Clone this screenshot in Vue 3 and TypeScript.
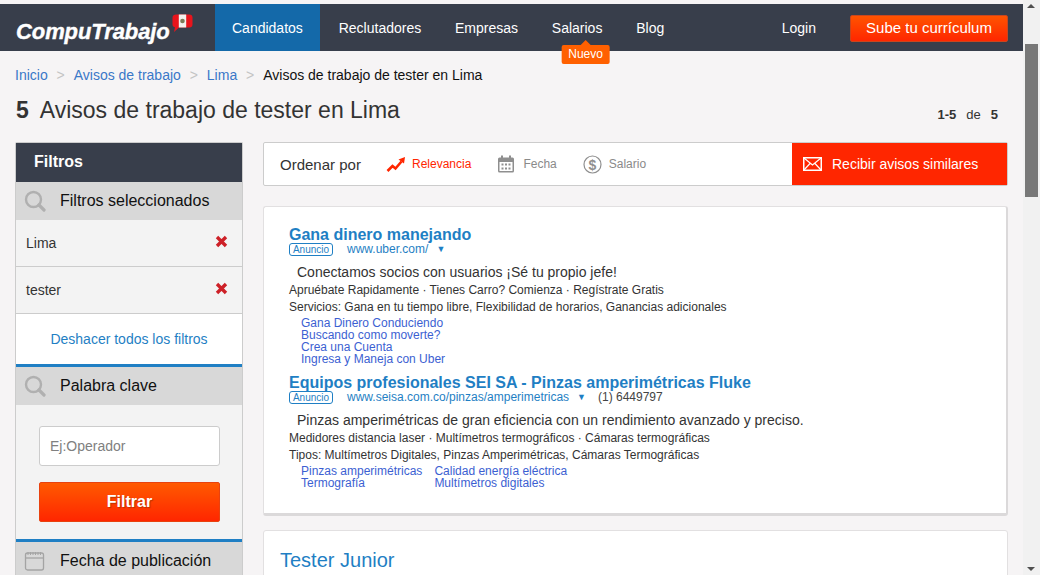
<script setup lang="ts">
import { ref } from 'vue'

interface Ad {
  title: string
  url: string
  phone?: string
  desc: string
  lines: string[]
  links: string[]
  cols: number
}

const navItems = ['Candidatos', 'Reclutadores', 'Empresas', 'Salarios', 'Blog']
const crumbs = ['Avisos de trabajo', 'Lima']
const filters = ['Lima', 'tester']
const keyword = ref('')

const ads: Ad[] = [
  {
    title: 'Gana dinero manejando',
    url: 'www.uber.com/',
    desc: 'Conectamos socios con usuarios ¡Sé tu propio jefe!',
    lines: [
      'Apruébate Rapidamente · Tienes Carro? Comienza · Regístrate Gratis',
      'Servicios: Gana en tu tiempo libre, Flexibilidad de horarios, Ganancias adicionales'
    ],
    links: ['Gana Dinero Conduciendo', 'Buscando como moverte?', 'Crea una Cuenta', 'Ingresa y Maneja con Uber'],
    cols: 1
  },
  {
    title: 'Equipos profesionales SEI SA - Pinzas amperimétricas Fluke',
    url: 'www.seisa.com.co/pinzas/amperimetricas',
    phone: '(1) 6449797',
    desc: 'Pinzas amperimétricas de gran eficiencia con un rendimiento avanzado y preciso.',
    lines: [
      'Medidores distancia laser · Multímetros termográficos · Cámaras termográficas',
      'Tipos: Multímetros Digitales, Pinzas Amperimétricas, Cámaras Termográficas'
    ],
    links: ['Pinzas amperimétricas', 'Calidad energía eléctrica', 'Termografía', 'Multímetros digitales'],
    cols: 2
  }
]
</script>

<template>
  <div class="window">
    <div class="page">
      <header class="topbar">
        <a class="logo">
          <span class="logo-text">CompuTrabajo</span>
          <svg class="flag" width="21" height="19" viewBox="0 0 21 19">
            <path d="M4 .5h13.500c1.800 0 3 1.200 3 3v7c0 1.800-1.200 3-3 3H7l-5 4.500 1-4.700c-1.600-.3-2.500-1.300-2.500-2.800v-7C.5 1.700 2.200.5 4 .5z" fill="#e8141c" />
            <rect x="6.800" y=".5" width="7.400" height="13" fill="#f4f1ee" />
            <circle cx="10.500" cy="7" r="2.300" fill="#7c7a58" />
          </svg>
        </a>
        <nav class="nav">
          <a
            v-for="(item, i) in navItems"
            :key="item"
            class="nav-item"
            :class="{ active: i === 0 }"
          >
            {{ item }}
            <span v-if="item === 'Salarios'" class="nuevo">Nuevo</span>
          </a>
        </nav>
        <a class="login">Login</a>
        <a class="upload">Sube tu currículum</a>
      </header>

      <div class="crumbs">
        <a>Inicio</a>
        <template v-for="c in crumbs" :key="c">
          <span class="sep">&gt;</span>
          <a>{{ c }}</a>
        </template>
        <span class="sep">&gt;</span>
        <span class="here">Avisos de trabajo de tester en Lima</span>
      </div>

      <div class="heading">
        <h1><b>5</b>Avisos de trabajo de tester en Lima</h1>
        <div class="count"><b>1-5</b><span>de</span><b>5</b></div>
      </div>

      <div class="columns">
        <aside class="filters">
          <div class="filters-title">Filtros</div>

          <div class="group-title">
            <svg class="g-icon" width="22" height="22" viewBox="0 0 22 22" fill="none" stroke="#b0b0b0">
              <circle cx="9.500" cy="9.500" r="7.500" stroke-width="2.400" />
              <path d="M15 15l5 5" stroke-width="3.200" stroke-linecap="round" />
            </svg>
            Filtros seleccionados
          </div>
          <div v-for="f in filters" :key="f" class="chosen">
            <span>{{ f }}</span>
            <svg width="13" height="13" viewBox="0 0 13 13">
              <path d="M2 2l9 9M11 2l-9 9" stroke="#cd2027" stroke-width="3.400" />
            </svg>
          </div>
          <a class="undo">Deshacer todos los filtros</a>

          <div class="group-title ruled">
            <svg class="g-icon" width="22" height="22" viewBox="0 0 22 22" fill="none" stroke="#b0b0b0">
              <circle cx="9.500" cy="9.500" r="7.500" stroke-width="2.400" />
              <path d="M15 15l5 5" stroke-width="3.200" stroke-linecap="round" />
            </svg>
            Palabra clave
          </div>
          <div class="keyword">
            <input v-model="keyword" type="text" placeholder="Ej:Operador">
            <button type="button">Filtrar</button>
          </div>

          <div class="group-title ruled">
            <svg class="g-icon" width="22" height="22" viewBox="0 0 22 22" fill="none" stroke="#a4a4a4">
              <rect x="1.500" y="3" width="18" height="17" rx="2" stroke-width="1.300" />
              <path d="M1.500 8h18" stroke-width="1.300" />
              <path d="M4 2v3M6.500 2v3M9 2v3M11.500 2v3M14 2v3M16.500 2v3" stroke-width="1" />
            </svg>
            Fecha de publicación
          </div>
        </aside>

        <section class="results">
          <div class="sortbar">
            <span class="sort-label">Ordenar por</span>
            <a class="sort on">
              <svg width="19" height="17" viewBox="0 0 19 17" fill="none">
                <path d="M1.500 15l5-5 3 2.500 6-7" stroke="#ff2600" stroke-width="2.600" />
                <path d="M12.500 3.500L19 1l-1 6.500z" fill="#ff2600" />
              </svg>
              Relevancia
            </a>
            <a class="sort">
              <svg width="19" height="18" viewBox="0 0 19 18">
                <rect x="1" y="2.500" width="16" height="15" rx="1.500" fill="#8f8f8f" />
                <rect x="2.500" y="7" width="13" height="9" fill="#fff" />
                <path d="M4 .5h2v3H4zM12 .5h2v3h-2z" fill="#8f8f8f" />
                <path d="M4.500 8.500h2v2h-2zM8 8.500h2v2H8zM11.500 8.500h2v2h-2zM4.500 12.500h2v2h-2zM8 12.500h2v2H8zM11.500 12.500h2v2h-2z" fill="#8f8f8f" />
              </svg>
              Fecha
            </a>
            <a class="sort">
              <svg width="19" height="19" viewBox="0 0 19 19">
                <circle cx="9.500" cy="9.500" r="8.500" fill="none" stroke="#8f8f8f" stroke-width="1.200" />
                <text x="9.500" y="14.500" text-anchor="middle" class="dollar">$</text>
              </svg>
              Salario
            </a>
            <a class="alerts">
              <svg width="19" height="14" viewBox="0 0 19 14" fill="none" stroke="#fff">
                <rect x=".75" y=".75" width="17.500" height="12.500" stroke-width="1.500" />
                <path d="M1 1l8.500 7L18 1M1 13l6-6.500M18 13l-6-6.500" stroke-width="1.200" />
              </svg>
              Recibir avisos similares
            </a>
          </div>

          <div class="card ads">
            <div v-for="ad in ads" :key="ad.title" class="ad">
              <a class="ad-title">{{ ad.title }}</a>
              <div class="ad-meta">
                <span class="badge">Anuncio</span>
                <a class="ad-url">{{ ad.url }}</a>
                <span class="caret">▼</span>
                <span v-if="ad.phone" class="phone">{{ ad.phone }}</span>
              </div>
              <p class="ad-desc">{{ ad.desc }}</p>
              <p v-for="l in ad.lines" :key="l" class="ad-line">{{ l }}</p>
              <div class="ad-links" :class="{ two: ad.cols === 2 }">
                <a v-for="s in ad.links" :key="s">{{ s }}</a>
              </div>
            </div>
          </div>

          <div class="card job">
            <a class="job-title">Tester Junior</a>
          </div>
        </section>
      </div>
    </div>

    <div class="scrollbar">
      <span class="arrow up"></span>
      <span class="thumb"></span>
      <span class="arrow down"></span>
    </div>
  </div>
</template>

<style>
html,
body {
  margin: 0;
  height: 100%;
  overflow: hidden;
}
</style>

<style scoped>
.window {
  display: flex;
  height: 575px;
  overflow: hidden;
  background: #f6f4f5;
  font-family: "Liberation Sans", Arial, sans-serif;
  color: #333;
}

.page {
  flex: 1;
  min-width: 0;
  padding-top: 4px;
  overflow: hidden;
}

a {
  cursor: pointer;
}

.topbar {
  display: flex;
  align-items: center;
  height: 47px;
  background: #383e4b;
  color: #fff;
}

.logo {
  display: flex;
  align-items: flex-start;
  width: 215px;
  height: 47px;
  box-sizing: border-box;
  padding-left: 16px;
}

.logo-text {
  margin-top: 15px;
  font-size: 22px;
  line-height: 26px;
  font-weight: bold;
  font-style: italic;
  letter-spacing: -0.1px;
  -webkit-text-stroke: 0.4px #fff;
}

.flag {
  margin: 10px 0 0 2px;
}

.nav {
  display: flex;
  height: 47px;
}

.nav-item {
  position: relative;
  padding: 0 16.9px;
  font-size: 14px;
  line-height: 49px;
}

.nav-item.active {
  margin-right: 1.5px;
  padding: 0 17.5px 0 17px;
  background: #1469a9;
}

.nuevo {
  position: absolute;
  left: calc(50% + 8.5px);
  top: 41px;
  transform: translateX(-50%);
  padding: 0 7px;
  height: 19px;
  border-radius: 2px;
  background: #ff6000;
  font-size: 12px;
  line-height: 18px;
}

.nuevo::before {
  content: '';
  position: absolute;
  left: 50%;
  top: -5px;
  margin-left: -5px;
  border: 5px solid transparent;
  border-top: 0;
  border-bottom-color: #ff6000;
}

.login {
  margin-left: auto;
  font-size: 14px;
}

.upload {
  width: 158px;
  height: 27px;
  box-sizing: border-box;
  margin: 1px 15px 0 34px;
  border: 1px solid #c9461f;
  border-radius: 2px;
  background: linear-gradient(#ff5400, #ff2600);
  font-size: 15px;
  line-height: 24px;
  text-align: center;
}

.crumbs {
  display: flex;
  margin: 15px 0 0 15px;
  font-size: 14px;
  line-height: 18px;
  color: #3a78c8;
}

.sep {
  width: 26px;
  text-align: center;
  color: #c4c4c4;
}

.here {
  color: #111;
}

.heading {
  display: flex;
  align-items: center;
  justify-content: space-between;
  height: 32px;
  margin: 10px 25px 0 16px;
}

h1 {
  margin: 0;
  font-size: 23px;
  font-weight: normal;
}

h1 b {
  margin-right: 11px;
}

.count {
  display: flex;
  gap: 10px;
  margin-top: 8px;
  font-size: 13px;
}

.columns {
  display: flex;
  gap: 20px;
  margin: 16px 15px 0;
  align-items: flex-start;
}

.filters {
  width: 226px;
  flex: none;
  border: 1px solid #ccc;
  border-bottom: 0;
  border-radius: 2px 2px 0 0;
  background: #fff;
}

.filters-title {
  height: 39px;
  padding-left: 18px;
  background: #383e4b;
  color: #fff;
  font-size: 16px;
  font-weight: bold;
  line-height: 38px;
}

.group-title {
  position: relative;
  height: 38px;
  padding-left: 44px;
  background: #d8d8d8;
  color: #111;
  font-size: 16px;
  line-height: 37px;
}

.group-title.ruled {
  border-top: 3px solid #1f7fc4;
}

.g-icon {
  position: absolute;
  left: 8px;
  top: 8px;
}

.chosen {
  display: flex;
  align-items: center;
  justify-content: space-between;
  height: 46px;
  padding: 0 14px 0 10px;
  border-bottom: 1px solid #ccc;
  background: #f3f3f3;
  font-size: 14px;
}

.chosen svg {
  margin-top: -4px;
}

.undo {
  display: block;
  height: 50px;
  color: #1f7fc4;
  font-size: 14px;
  line-height: 51px;
  text-align: center;
}

.keyword {
  display: flex;
  flex-direction: column;
  gap: 16px;
  height: 134px;
  box-sizing: border-box;
  padding: 21px 23px 0;
  background: #f3f3f3;
}

.keyword input {
  width: 181px;
  height: 40px;
  box-sizing: border-box;
  padding: 0 10px;
  border: 1px solid #ccc;
  border-radius: 3px;
  background: #fff;
  font: 14px "Liberation Sans", Arial, sans-serif;
  outline: none;
}

.keyword input::placeholder {
  color: #808080;
}

.keyword button {
  width: 181px;
  height: 40px;
  border: 1px solid #e8420f;
  border-radius: 2px;
  background: linear-gradient(#ff5a00, #ff2600);
  color: #fff;
  font: bold 16px "Liberation Sans", Arial, sans-serif;
  text-shadow: 1px 1px 1px rgba(120, 40, 0, 0.5);
}

.results {
  flex: 1;
  min-width: 0;
}

.sortbar {
  display: flex;
  align-items: center;
  height: 44px;
  box-sizing: border-box;
  padding-left: 16px;
  border: 1px solid #ccc;
  border-radius: 2px;
  background: #fff;
}

.sort-label {
  width: 106px;
  font-size: 15px;
}

.sort {
  display: flex;
  align-items: center;
  gap: 7px;
  margin-right: 26px;
  font-size: 12px;
  color: #8a8a8a;
}

.sort.on {
  color: #ff2600;
}

.dollar {
  font: bold 14px "Liberation Sans", Arial, sans-serif;
  fill: #8f8f8f;
}

.alerts {
  display: flex;
  align-items: center;
  gap: 10px;
  align-self: stretch;
  width: 215px;
  margin-left: auto;
  box-sizing: border-box;
  padding-left: 11px;
  background: #ff2600;
  color: #fff;
  font-size: 14px;
}

.card {
  border: 1px solid #e2e0e1;
  border-radius: 3px;
  background: #fff;
}

.ads {
  height: 310px;
  box-sizing: border-box;
  margin-top: 20px;
  padding: 20px 25px 0;
  border-bottom: 3px solid #dbd9da;
  border-right: 2px solid #dbd9da;
}

.ad {
  margin-bottom: 10px;
}

.ad-title {
  display: block;
  color: #1f7fc4;
  font-size: 16px;
  font-weight: bold;
  line-height: 16px;
}

.ad-meta {
  display: flex;
  align-items: center;
  height: 14px;
  margin-top: -1px;
  font-size: 12px;
}

.badge {
  width: 44px;
  height: 13px;
  box-sizing: border-box;
  margin-right: 14px;
  border: 1px solid #1f7fc4;
  border-radius: 3px;
  color: #1f7fc4;
  font-size: 10px;
  line-height: 11px;
  text-align: center;
}

.ad-url {
  color: #1f7fc4;
}

.caret {
  margin-left: 8px;
  color: #1f7fc4;
  font-size: 9px;
}

.phone {
  margin-left: 12px;
  color: #444;
}

.ad-desc {
  margin: 8px 0 3px 8px;
  font-size: 14px;
  line-height: 16px;
}

.ad-line {
  margin: 2px 0 0;
  font-size: 12px;
  line-height: 15px;
}

.ad-links {
  display: grid;
  justify-content: start;
  column-gap: 12px;
  margin: 2px 0 0 12px;
  color: #3c5fd2;
  font-size: 12px;
  line-height: 12px;
}

.ad-links.two {
  grid-template-columns: auto auto;
}

.job {
  height: 60px;
  margin-top: 14px;
  padding: 17px 16px 0;
}

.job-title {
  color: #1f7fc4;
  font-size: 20px;
  line-height: 24px;
}

.scrollbar {
  position: relative;
  flex: none;
  width: 17px;
  background: #f1f1f1;
}

.thumb {
  position: absolute;
  left: 2px;
  top: 44px;
  width: 13px;
  height: 153px;
  background: #787878;
}

.arrow {
  position: absolute;
  left: 4px;
  border: 4px solid transparent;
}

.arrow.up {
  top: 4px;
  border-top: 0;
  border-bottom: 4px solid #505050;
}

.arrow.down {
  bottom: 4px;
  border-bottom: 0;
  border-top: 4px solid #505050;
}
</style>
